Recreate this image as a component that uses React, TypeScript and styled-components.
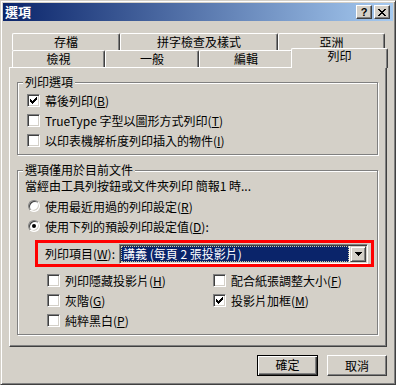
import styled, { createGlobalStyle } from 'styled-components';

const face = `"Noto Sans CJK TC", "Noto Sans", sans-serif`;
const face3d = '#d4d0c8';
const shadow = '#808080';
const darkShadow = '#404040';

const GlobalStyle = createGlobalStyle`
  html, body {
    margin: 0;
    padding: 0;
    background: ${face3d};
  }
  body {
    font-family: ${face};
    font-size: 12px;
    color: #000;
  }
`;

const Window = styled.div`
  box-sizing: border-box;
  width: 396px;
  height: 385px;
  padding: 2px;
  background: ${face3d};
  border: 1px solid;
  border-color: ${face3d} ${darkShadow} ${darkShadow} ${face3d};
  box-shadow: inset 1px 1px #fff, inset -1px -1px ${shadow};
  display: flex;
  flex-direction: column;
`;

const TitleBar = styled.div`
  box-sizing: border-box;
  height: 18px;
  padding: 0 3px 0 2px;
  display: flex;
  align-items: center;
  background: linear-gradient(to right, #0a246a, #a6caf0);
`;

const Title = styled.div`
  flex: 1;
  color: #fff;
  font-weight: bold;
  font-size: 13px;
  line-height: 18px;
`;

const CaptionButtons = styled.div`
  display: flex;
  gap: 2px;
`;

const CaptionButton = styled.div`
  box-sizing: border-box;
  width: 16px;
  height: 14px;
  display: flex;
  align-items: center;
  justify-content: center;
  background: ${face3d};
  border: 1px solid;
  border-color: #fff ${darkShadow} ${darkShadow} #fff;
  box-shadow: inset -1px -1px ${shadow};
  font-family: "Liberation Sans", sans-serif;
  font-weight: bold;
  font-size: 11px;
  line-height: 12px;
`;

const Body = styled.div`
  flex: 1;
  padding: 12px 6px 0;
  display: flex;
  flex-direction: column;
`;

const TabRow = styled.div`
  display: flex;
  height: 17px;
  padding-left: 3px;
`;

const Tab = styled.div<{ $w: number; $active?: boolean }>`
  box-sizing: border-box;
  width: ${(p) => p.$w + (p.$active ? 4 : 0)}px;
  height: ${(p) => (p.$active ? 20 : 17)}px;
  margin: ${(p) => (p.$active ? '-2px -2px 0' : '0')};
  position: relative;
  z-index: ${(p) => (p.$active ? 1 : 0)};
  padding-top: ${(p) => (p.$active ? 0 : 1)}px;
  text-align: center;
  line-height: 13px;
  background: ${face3d};
  border-top: 1px solid #fff;
  border-left: 1px solid #fff;
  border-right: 1px solid ${darkShadow};
  border-radius: 2px 2px 0 0;
  box-shadow: inset -1px 0 ${shadow};
`;

const Panel = styled.div`
  box-sizing: border-box;
  height: 280px;
  padding: 14px 8px 0 7px;
  border: 1px solid;
  border-color: #fff ${darkShadow} ${darkShadow} #fff;
  box-shadow: inset -1px -1px ${shadow};
  display: flex;
  flex-direction: column;
`;

const Group = styled.div<{ $gapTop?: number }>`
  position: relative;
  margin-top: ${(p) => p.$gapTop ?? 0}px;
  padding: 7px 0 4px 9px;
  border: 1px solid ${shadow};
  box-shadow: inset 1px 1px #fff, 1px 1px #fff;
  display: flex;
  flex-direction: column;
`;

const Legend = styled.div`
  position: absolute;
  top: -9px;
  left: 5px;
  padding: 0 2px;
  line-height: 16px;
  background: ${face3d};
`;

const Row = styled.div`
  height: 20px;
  display: flex;
  align-items: center;
  gap: 5px;
  white-space: nowrap;
`;

const Note = styled.div`
  height: 20px;
  margin: -2px 0 0 -2px;
  line-height: 20px;
  white-space: nowrap;
`;

const CheckBox = styled.span`
  box-sizing: border-box;
  width: 13px;
  height: 13px;
  flex: none;
  display: flex;
  align-items: center;
  justify-content: center;
  background: #fff;
  border: 1px solid;
  border-color: ${shadow} #fff #fff ${shadow};
  box-shadow: inset 1px 1px ${darkShadow}, inset -1px -1px ${face3d};
`;

const Radio = styled.span`
  box-sizing: border-box;
  width: 12px;
  height: 12px;
  margin-left: 1px;
  flex: none;
  border-radius: 50%;
  display: flex;
  align-items: center;
  justify-content: center;
  background: #fff;
  border: 1px solid;
  border-color: ${shadow} #fff #fff ${shadow};
  box-shadow: inset 1px 1px ${darkShadow}, inset -1px -1px ${face3d};
`;

const Dot = styled.span`
  width: 4px;
  height: 4px;
  border-radius: 50%;
  background: #000;
`;

const Highlight = styled.div`
  box-sizing: border-box;
  width: 339px;
  height: 27px;
  margin: 4px 0 0 8px;
  padding: 1px 3px 0 7px;
  border: 3px solid #ff0000;
  display: flex;
  align-items: flex-start;
  justify-content: space-between;
`;

const FieldLabel = styled.span`
  line-height: 20px;
  white-space: nowrap;
`;

const Combo = styled.div`
  box-sizing: border-box;
  width: 249px;
  height: 20px;
  padding: 1px;
  background: #fff;
  border: 1px solid;
  border-color: ${shadow} #fff #fff ${shadow};
  box-shadow: inset 1px 1px ${darkShadow}, inset -1px -1px ${face3d};
  display: flex;
  gap: 1px;
`;

const Selected = styled.div`
  box-sizing: border-box;
  flex: 1;
  padding-left: 1px;
  background: #0a246a;
  color: #fff;
  border: 1px dotted #c8c8a8;
  line-height: 14px;
  white-space: nowrap;
`;

const DropButton = styled.div`
  box-sizing: border-box;
  width: 16px;
  height: 16px;
  display: flex;
  align-items: center;
  justify-content: center;
  background: ${face3d};
  border: 1px solid;
  border-color: ${face3d} ${darkShadow} ${darkShadow} ${face3d};
  box-shadow: inset 1px 1px #fff, inset -1px -1px ${shadow};
`;

const OptionGrid = styled.div`
  margin: 3px 0 0 20px;
  display: grid;
  grid-template-columns: 166px auto;
`;

const ButtonRow = styled.div`
  margin-top: 8px;
  display: flex;
  justify-content: flex-end;
  gap: 9px;
`;

const PushButton = styled.div<{ $w: number; $default?: boolean }>`
  box-sizing: border-box;
  width: ${(p) => p.$w}px;
  height: 21px;
  line-height: ${(p) => (p.$default ? 17 : 19)}px;
  text-align: center;
  background: ${face3d};
  border: 1px solid;
  border-color: ${(p) => (p.$default ? '#000' : `#fff ${darkShadow} ${darkShadow} #fff`)};
  box-shadow: ${(p) =>
    p.$default
      ? `inset 1px 1px #fff, inset -1px -1px ${darkShadow}, inset -2px -2px ${shadow}`
      : `inset -1px -1px ${shadow}`};
`;

const CheckMark = () => (
  <svg width="7" height="7" viewBox="0 0 7 7" shapeRendering="crispEdges">
    <path
      d="M0 2h1v3H0zM1 3h1v3H1zM2 4h1v3H2zM3 3h1v3H3zM4 2h1v3H4zM5 1h1v3H5zM6 0h1v3H6z"
      fill="#000"
    />
  </svg>
);

const CloseGlyph = () => (
  <svg width="8" height="7" viewBox="0 0 8 7" shapeRendering="crispEdges">
    <path
      d="M0 0h2v1H0zM6 0h2v1H6zM1 1h2v1H1zM5 1h2v1H5zM2 2h4v1H2zM3 3h2v1H3zM2 4h4v1H2zM1 5h2v1H1zM5 5h2v1H5zM0 6h2v1H0zM6 6h2v1H6z"
      fill="#000"
    />
  </svg>
);

const DownArrow = () => (
  <svg width="7" height="4" viewBox="0 0 7 4" shapeRendering="crispEdges">
    <path d="M0 0h7v1H0zM1 1h5v1H1zM2 2h3v1H2zM3 3h1v1H3z" fill="#000" />
  </svg>
);

const Check = ({ label, keyChar, checked }: { label: string; keyChar: string; checked?: boolean }) => (
  <Row>
    <CheckBox>{checked && <CheckMark />}</CheckBox>
    <span>
      {label}(<u>{keyChar}</u>)
    </span>
  </Row>
);

export default function App() {
  return (
    <>
      <GlobalStyle />
      <Window>
        <TitleBar>
          <Title>選項</Title>
          <CaptionButtons>
            <CaptionButton>?</CaptionButton>
            <CaptionButton>
              <CloseGlyph />
            </CaptionButton>
          </CaptionButtons>
        </TitleBar>
        <Body>
          <TabRow>
            <Tab $w={108}>存檔</Tab>
            <Tab $w={158}>拼字檢查及樣式</Tab>
            <Tab $w={107}>亞洲</Tab>
          </TabRow>
          <TabRow>
            <Tab $w={93}>檢視</Tab>
            <Tab $w={94}>一般</Tab>
            <Tab $w={94}>編輯</Tab>
            <Tab $w={93} $active>
              列印
            </Tab>
          </TabRow>
          <Panel>
            <Group>
              <Legend>列印選項</Legend>
              <Check label="幕後列印" keyChar="B" checked />
              <Check label="TrueType 字型以圖形方式列印" keyChar="T" />
              <Check label="以印表機解析度列印插入的物件" keyChar="I" />
            </Group>
            <Group $gapTop={15}>
              <Legend>選項僅用於目前文件</Legend>
              <Note>當經由工具列按鈕或文件夾列印 簡報1 時...</Note>
              <Row>
                <Radio />
                <span>
                  使用最近用過的列印設定(<u>R</u>)
                </span>
              </Row>
              <Row>
                <Radio>
                  <Dot />
                </Radio>
                <span>
                  使用下列的預設列印設定值(<u>D</u>):
                </span>
              </Row>
              <Highlight>
                <FieldLabel>
                  列印項目(<u>W</u>):
                </FieldLabel>
                <Combo>
                  <Selected>講義 (每頁 2 張投影片)</Selected>
                  <DropButton>
                    <DownArrow />
                  </DropButton>
                </Combo>
              </Highlight>
              <OptionGrid>
                <Check label="列印隱藏投影片" keyChar="H" />
                <Check label="配合紙張調整大小" keyChar="F" />
                <Check label="灰階" keyChar="G" />
                <Check label="投影片加框" keyChar="M" checked />
                <Check label="純粹黑白" keyChar="P" />
              </OptionGrid>
            </Group>
          </Panel>
          <ButtonRow>
            <PushButton $w={61} $default>
              確定
            </PushButton>
            <PushButton $w={60}>取消</PushButton>
          </ButtonRow>
        </Body>
      </Window>
    </>
  );
}
